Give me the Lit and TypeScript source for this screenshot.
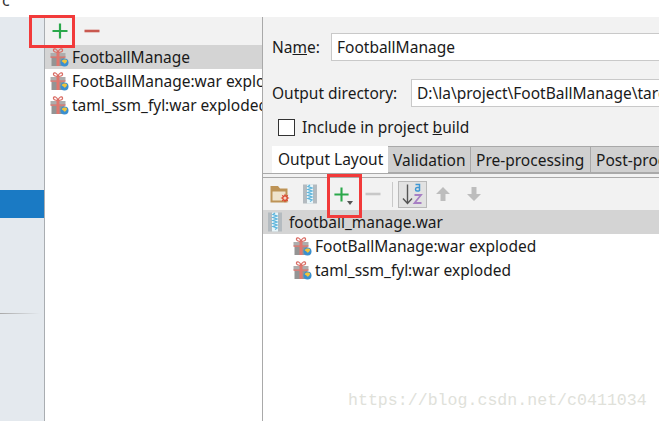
import { LitElement, html, css, svg } from "lit";
import { customElement } from "lit/decorators.js";

const gift = () => html`<svg class="ico" width="20" height="20" viewBox="0 0 20 20">
  ${svg`<path d="M9 5.500C6 5.500 4 4.500 4.500 2.800C5 1 8 1.500 9 5.500C10 1.500 13 1 13.500 2.800C14 4.500 12 5.500 9 5.500z" fill="none" stroke="#d96c64" stroke-width="1.300"/>
  <rect x="1.500" y="6" width="15" height="4" fill="#adadad"/>
  <rect x="2.500" y="10.500" width="13" height="8.500" fill="#949494"/>
  <rect x="1.500" y="9.500" width="15" height="1.300" fill="#d96c64"/>
  <rect x="7.500" y="5.500" width="3" height="13.500" fill="#e0766e"/>
  <circle cx="15.500" cy="15.500" r="4" fill="#3a8fcf"/>
  <path d="M12.500 14c1-1.800 4.500-2.200 5.500-.6c.4 1-1 2.600-2.500 3.400c-.6-1.400-2.200-1.600-3-2.800z" fill="#f0c43c"/>`}
</svg>`;

const zip = (w = 16, h = 20) => html`<svg class="ico" width=${w} height=${h} viewBox="0 0 16 20">
  ${svg`<rect x="1" y="0.500" width="14" height="19" fill="#b4bbc0"/>
  <rect x="5" y="0.500" width="6" height="19" fill="#e8f5f9"/>
  <path d="M8 1l-2 1.500 4 1.500-4 1.500 4 1.500-4 1.500 4 1.500-4 1.500 4 1.500-4 1.500 4 1.500-2 1.500" fill="none" stroke="#5cb4dc" stroke-width="1.300"/>`}
</svg>`;

const folder = () => html`<svg class="ico" width="20" height="20" viewBox="0 0 20 20">
  ${svg`<path d="M0.500 2h7.500l2 2.500h7.500v14H0.500z" fill="#bd9356"/>
  <path d="M2.500 7.500h13v9h-13z" fill="#efe3cd"/>
  <path d="M15 9.500l1 2.300 2.300-1-1 2.300 2.200 1-2.200 1 1 2.300-2.300-1-1 2.300-1-2.300-2.300 1 1-2.300-2.200-1 2.200-1-1-2.300 2.300 1z" fill="#d9452e"/>
  <circle cx="15" cy="14.100" r="1.600" fill="#f6d4c2"/>`}
</svg>`;

const plus = (w = 18) => html`<svg class="ico" width=${w} height=${w} viewBox="0 0 18 18">
  ${svg`<path d="M9 1.500v15M1.500 9h15" stroke="#2aa84a" stroke-width="2.200" fill="none"/>`}
</svg>`;

const minus = (c: string) => html`<svg class="ico" width="18" height="18" viewBox="0 0 18 18">
  ${svg`<path d="M1.500 9h15" stroke=${c} stroke-width="2.600" fill="none"/>`}
</svg>`;

const arrow = (up: boolean) => html`<svg class="ico" width="16" height="16" viewBox="0 0 16 16">
  ${svg`<path d=${up ? "M8 1L15 8H10.500V15H5.500V8H1z" : "M8 15L15 8H10.500V1H5.500V8H1z"} fill="#bdbdbd"/>`}
</svg>`;

const sortAz = () => html`<svg class="ico" width="26" height="24" viewBox="0 0 26 24">
  ${svg`<path d="M7.500 2.500v19M3 16.500l4.500 5 4.500-5" fill="none" stroke="#555" stroke-width="1.400"/>
  <path d="M15.500 2.500h4v6.500M19.500 5.500h-2.500c-2 0-2 3.500 0 3.500h2.500" fill="none" stroke="#3f97d3" stroke-width="1.500"/>
  <path d="M14.500 13h6.500l-6.500 8h7" fill="none" stroke="#a77fc4" stroke-width="1.800"/>`}
</svg>`;

@customElement("app-root")
export class AppRoot extends LitElement {
  static styles = css`
    :host {
      display: block;
      position: relative;
      width: 659px;
      height: 421px;
      overflow: hidden;
      background: #fff;
      font-family: "Noto Sans", "Open Sans", sans-serif;
      font-size: 15.5px;
      color: #1a1a1a;
    }
    .ico { display: block; flex: none; }
    .top {
      height: 17px;
      padding-left: 2px;
      font-size: 16px;
      line-height: 0;
      overflow: hidden;
      color: #333;
    }
    .main { display: flex; height: 404px; }
    .side {
      width: 44px;
      flex: none;
      background: #e4e9ee;
      border-right: 1px solid #a9adb1;
      padding-top: 173px;
    }
    .side-active { height: 28px; background: #1a7ac4; }
    .side-line {
      margin-top: 95px;
      height: 1px;
      width: 40px;
      background: linear-gradient(90deg, #a9a9a9, #e4e9ee);
    }
    .mid {
      width: 217px;
      flex: none;
      overflow: hidden;
      border-right: 1px solid #a9a9a9;
    }
    .mid-bar {
      height: 28px;
      background: #f2f2f2;
      display: flex;
      align-items: center;
      gap: 14px;
      padding-left: 6px;
    }
    .row {
      display: flex;
      align-items: center;
      gap: 3px;
      height: 24px;
      white-space: nowrap;
    }
    .mid .row { padding-left: 4px; }
    .row.sel { background: #d4d4d4; }
    .right {
      flex: 1;
      min-width: 0;
      overflow: hidden;
      display: flex;
      flex-direction: column;
    }
    .form {
      background: #f2f2f2;
      padding: 16px 0 0 9px;
      height: 157px;
      flex: none;
      box-sizing: border-box;
      display: flex;
      flex-direction: column;
    }
    .field {
      display: flex;
      align-items: center;
      height: 28px;
      white-space: nowrap;
    }
    .field + .field { margin-top: 18px; }
    .label { flex: none; width: 59px; }
    .label.long { width: 139px; }
    .input {
      flex: 1;
      height: 28px;
      line-height: 26px;
      box-sizing: border-box;
      background: #fff;
      border: 1px solid #c9c9c9;
      border-right: none;
      padding-left: 5px;
      overflow: hidden;
    }
    .check {
      display: flex;
      align-items: center;
      gap: 7px;
      margin: 11px 0 0 6px;
      height: 18px;
      white-space: nowrap;
    }
    .box {
      width: 15px;
      height: 15px;
      border: 1px solid #333;
      background: #fff;
      flex: none;
    }
    .tabs { display: flex; margin-top: 10px; height: 27px; }
    .tab {
      flex: none;
      box-sizing: border-box;
      height: 27px;
      line-height: 26px;
      padding: 0 5px;
      background: #d0d0d0;
      border: 1px solid #a9a9a9;
      border-left: none;
      white-space: nowrap;
    }
    .tab.on {
      background: #fff;
      border: none;
      width: 116px;
      padding-left: 6px;
      line-height: 27px;
    }
    .tab.v { width: 83px; }
    .tab.p { width: 120px; }
    .tab.q { width: 80px; border-right: none; }
    .sep-strip {
      height: 5px;
      box-sizing: border-box;
      background: #f2f2f2;
      border-top: 1px solid #a9a9a9;
      margin-top: -1px;
      border-bottom: 1px solid #a9a9a9;
      flex: none;
    }
    .tool {
      height: 32px;
      flex: none;
      background: #f2f2f2;
      display: flex;
      align-items: center;
      padding-left: 7px;
    }
    .t1 { margin-right: 12px; }
    .t2 { margin-right: 15px; }
    .t3 { position: relative; margin-right: 14px; }
    .caret {
      position: absolute;
      right: -3px;
      bottom: -2px;
      border: 3.5px solid transparent;
      border-top: 4px solid #555;
      border-bottom: none;
    }
    .vsep {
      width: 1px;
      height: 25px;
      background: #c9c9c9;
      margin: 0 5px 0 10px;
    }
    .toggle {
      width: 27px;
      height: 25px;
      border: 1px solid #b9b9b9;
      background: #e2e2e2;
      display: flex;
      align-items: center;
      justify-content: center;
      margin-right: 8px;
    }
    .a1 { margin-right: 15px; }
    .tree .row { gap: 6px; padding-left: 4px; }
    .tree .row.child { padding-left: 29px; gap: 3px; }
    .mark {
      position: absolute;
      box-sizing: border-box;
      border: 3px solid #f23a3a;
      pointer-events: none;
    }
    .mark.a { left: 29px; top: 15px; width: 46px; height: 33px; }
    .mark.b { left: 327px; top: 174px; width: 35px; height: 44px; }
    .wm {
      position: absolute;
      left: 348px;
      top: 391px;
      font-family: "Liberation Mono", monospace;
      font-size: 16.6px;
      color: #e0e1da;
      white-space: nowrap;
    }
  `;

  render() {
    return html`
      <div class="top">c</div>
      <div class="main">
        <div class="side">
          <div class="side-active"></div>
          <div class="side-line"></div>
        </div>
        <div class="mid">
          <div class="mid-bar">${plus()}${minus("#c9584f")}</div>
          <div class="row sel">${gift()}<span>FootballManage</span></div>
          <div class="row">${gift()}<span>FootBallManage:war exploded</span></div>
          <div class="row">${gift()}<span>taml_ssm_fyl:war exploded</span></div>
        </div>
        <div class="right">
          <div class="form">
            <div class="field">
              <span class="label">Na<u>m</u>e:</span>
              <div class="input">FootballManage</div>
            </div>
            <div class="field">
              <span class="label long">Output directory:</span>
              <div class="input">D:\\la\\project\\FootBallManage\\target\\artifacts</div>
            </div>
            <div class="check">
              <span class="box"></span><span>Include in project <u>b</u>uild</span>
            </div>
            <div class="tabs">
              <div class="tab on">Output Layout</div>
              <div class="tab v">Validation</div>
              <div class="tab p">Pre-processing</div>
              <div class="tab q">Post-processing</div>
            </div>
          </div>
          <div class="sep-strip"></div>
          <div class="tool">
            <span class="t1">${folder()}</span>
            <span class="t2">${zip()}</span>
            <span class="t3">${plus(17)}<i class="caret"></i></span>
            ${minus("#c8c8c8")}
            <span class="vsep"></span>
            <span class="toggle">${sortAz()}</span>
            <span class="a1">${arrow(true)}</span>
            ${arrow(false)}
          </div>
          <div class="tree">
            <div class="row sel">${zip()}<span>football_manage.war</span></div>
            <div class="row child">${gift()}<span>FootBallManage:war exploded</span></div>
            <div class="row child">${gift()}<span>taml_ssm_fyl:war exploded</span></div>
          </div>
        </div>
      </div>
      <div class="mark a"></div>
      <div class="mark b"></div>
      <div class="wm">https://blog.csdn.net/c0411034</div>
    `;
  }
}
